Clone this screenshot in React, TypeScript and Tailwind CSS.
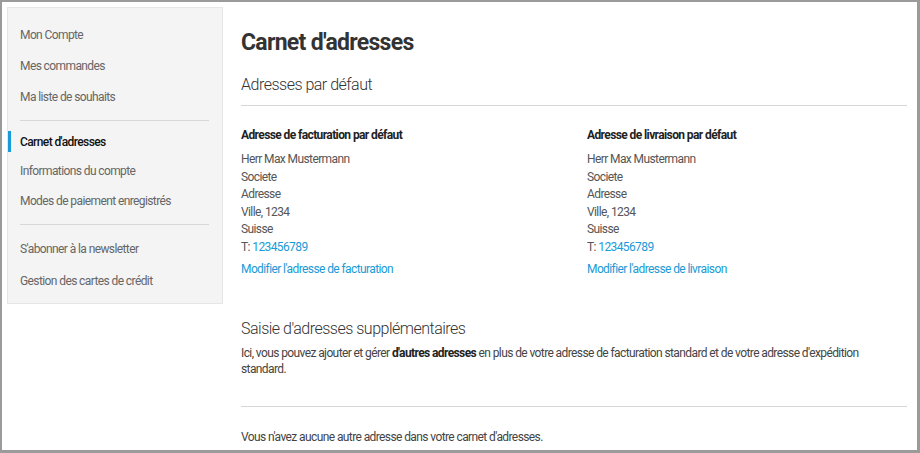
import React from "react";

const font = { fontFamily: '"Roboto", "Liberation Sans", sans-serif' };

const navTop = ["Mon Compte", "Mes commandes", "Ma liste de souhaits"];

function NavItem({ label, active, h = "h-[31px]" }: { label: string; active?: boolean; h?: string }) {
  return (
    <div className={`relative ${h} flex items-center pl-[12px]`}>
      {active && <span className="absolute left-0 top-[5px] h-[21px] w-[3px] bg-[#1a9ad6]" />}
      <span className={active ? "text-[#111] font-medium" : "text-[#666]"}>{label}</span>
    </div>
  );
}

function AddressCol({ title, link, className }: { title: string; link: string; className?: string }) {
  return (
    <div className={className}>
      <div className="font-bold text-[#222] h-[18px] leading-[18px]">{title}</div>
      <div className="mt-[7px] text-[#555] leading-[17.5px]">
        <div>Herr Max Mustermann</div>
        <div>Societe</div>
        <div>Adresse</div>
        <div>Ville, 1234</div>
        <div>Suisse</div>
        <div>
          T: <span className="text-[#1a9ad6]">123456789</span>
        </div>
      </div>
      <div className="mt-[5px] text-[#1a9ad6] leading-[17px]">{link}</div>
    </div>
  );
}

export default function App() {
  return (
    <div
      style={font}
      className="w-[920px] h-[453px] bg-white border-t-2 border-l-2 border-r-[3px] border-b-[3px] border-[#9b9b9b] flex text-[12px] tracking-[-0.6px] overflow-hidden"
    >
      <aside className="mt-[5px] ml-[5px] w-[216px] h-[297px] bg-[#f4f4f4] border border-[#e6e6e6] pt-[11px] pr-[13px]">
        <div>
          {navTop.map((l) => (
            <NavItem key={l} label={l} />
          ))}
        </div>
        <div className="ml-[12px] mt-[8px] mb-[5px] border-t border-[#d8d8d8]" />
        <div>
          <NavItem label="Carnet d'adresses" active />
          <NavItem label="Informations du compte" h="h-[28px]" />
          <NavItem label="Modes de paiement enregistrés" />
        </div>
        <div className="ml-[12px] mt-[8px] mb-[8px] border-t border-[#d8d8d8]" />
        <div>
          <NavItem label="S'abonner à la newsletter" />
          <NavItem label="Gestion des cartes de crédit" h="h-[33px]" />
        </div>
      </aside>

      <main className="flex-1 pl-[18px] pr-[10px] pt-[26px]">
        <h1 className="text-[23px] font-bold text-[#333] leading-[30px] tracking-[-0.7px]">Carnet d'adresses</h1>
        <h2 className="mt-[15px] text-[16px] font-light text-[#333] leading-[24px] tracking-[-0.5px]">
          Adresses par défaut
        </h2>
        <div className="mt-[8px] border-t border-[#d6d6d6]" />
        <div className="mt-[20px] flex">
          <AddressCol
            className="w-[346px] shrink-0"
            title="Adresse de facturation par défaut"
            link="Modifier l'adresse de facturation"
          />
          <AddressCol
            className="flex-1"
            title="Adresse de livraison par défaut"
            link="Modifier l'adresse de livraison"
          />
        </div>
        <h2 className="mt-[39px] text-[16px] font-light text-[#333] leading-[24px] tracking-[-0.5px]">
          Saisie d'adresses supplémentaires
        </h2>
        <p className="mt-[5px] w-[640px] text-[#444] leading-[15.5px]">
          Ici, vous pouvez ajouter et gérer <b className="text-[#222] font-bold">d'autres adresses</b> en plus de votre
          adresse de facturation standard et de votre adresse d'expédition standard.
        </p>
        <div className="mt-[29px] border-t border-[#d6d6d6]" />
        <p className="mt-[23px] text-[#444] leading-[15px]">Vous n'avez aucune autre adresse dans votre carnet d'adresses.</p>
      </main>
    </div>
  );
}
